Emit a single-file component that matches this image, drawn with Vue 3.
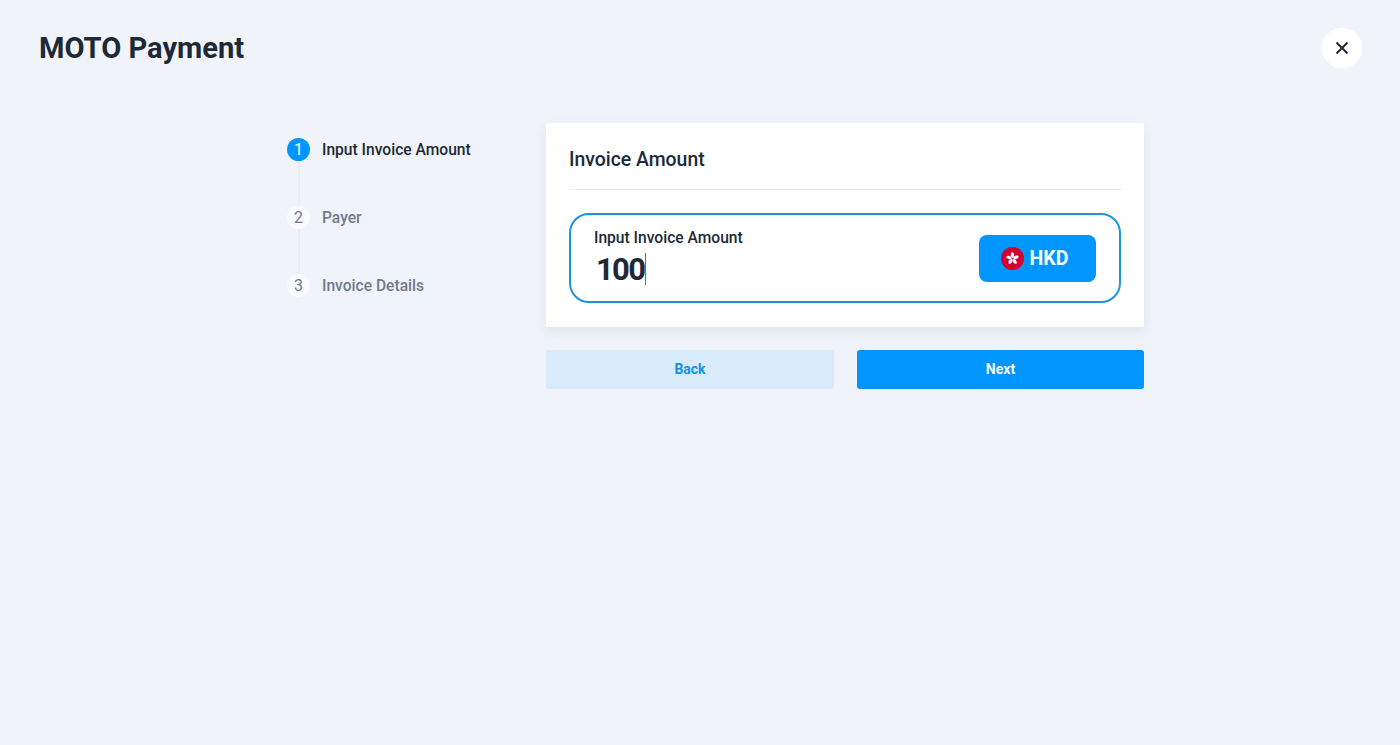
<script setup>
const steps = [
  { n: 1, label: 'Input Invoice Amount', active: true },
  { n: 2, label: 'Payer', active: false },
  { n: 3, label: 'Invoice Details', active: false },
]
const petals = [0, 72, 144, 216, 288]
</script>

<template>
  <div class="page">
    <header class="header">
      <h1 class="title">MOTO Payment</h1>
      <button class="close" aria-label="Close">
        <svg width="14" height="14" viewBox="0 0 14 14">
          <path d="M1.5 1.5 12.5 12.5M12.5 1.5 1.5 12.5" stroke="#1d2a36" stroke-width="2" fill="none" />
        </svg>
      </button>
    </header>
    <main class="main">
      <ol class="steps">
        <li v-for="s in steps" :key="s.n" class="step" :class="{ active: s.active }">
          <span class="num">{{ s.n }}</span>
          <span class="label">{{ s.label }}</span>
        </li>
      </ol>
      <section class="content">
        <div class="card">
          <h2 class="card-title">Invoice Amount</h2>
          <div class="field">
            <div class="field-text">
              <div class="field-label">Input Invoice Amount</div>
              <div class="amount"><span>100</span><i class="caret"></i></div>
            </div>
            <button class="currency">
              <svg class="flag" width="23" height="23" viewBox="0 0 24 24">
                <circle cx="12" cy="12" r="12" fill="#d5002f" />
                <g fill="#fff">
                  <path
                    v-for="a in petals"
                    :key="a"
                    d="M12 11.4C9.8 10.2 9.6 7.2 11.4 5.2 14.2 5.9 14.6 9.6 12 11.4Z"
                    :transform="`rotate(${a} 12 12)`"
                  />
                </g>
              </svg>
              <span>HKD</span>
            </button>
          </div>
        </div>
        <div class="actions">
          <button class="btn back">Back</button>
          <button class="btn next">Next</button>
        </div>
      </section>
    </main>
  </div>
</template>

<style>
html, body { margin: 0; background: #f0f4fa; }
</style>

<style scoped>
.page {
  min-height: 745px;
  box-sizing: border-box;
  background: #f0f4fa;
  font-family: Roboto, "Liberation Sans", sans-serif;
  color: #1d2a36;
}
.header {
  display: flex;
  align-items: center;
  justify-content: space-between;
  padding: 28px 38px 0 39px;
  height: 40px;
}
.title {
  margin: 0;
  font-size: 29.1px;
  line-height: 42px;
  font-weight: 700;
  color: #1d2a36;
}
.close {
  width: 40px;
  height: 40px;
  padding: 0;
  border: 0;
  border-radius: 50%;
  background: #fff;
  display: flex;
  align-items: center;
  justify-content: center;
}
.main {
  display: flex;
  padding: 55px 0 0 287px;
}
.steps {
  list-style: none;
  margin: 0;
  padding: 15px 0 0;
  width: 259px;
  flex: none;
}
.step {
  position: relative;
  display: flex;
  align-items: center;
  height: 23px;
  margin-bottom: 45px;
  gap: 12px;
}
.step:not(:last-child)::after {
  content: "";
  position: absolute;
  left: 10.5px;
  top: 23px;
  width: 2px;
  height: 45px;
  background: #e9eef5;
}
.num {
  width: 23px;
  height: 23px;
  flex: none;
  border-radius: 50%;
  display: flex;
  align-items: center;
  justify-content: center;
  font-size: 16px;
  background: #f8fafd;
  color: #6f7a8c;
}
.label {
  font-size: 15.6px;
  line-height: 24px;
  font-weight: 500;
  color: #6f7a8c;
}
.active .num { background: #0095ff; color: #fff; }
.active .label { color: #1d2a36; }
.content { width: 598px; flex: none; }
.card {
  box-sizing: border-box;
  height: 204px;
  padding: 0 23px;
  background: #fff;
  border-radius: 2px;
  box-shadow: 0 4px 12px rgba(29, 42, 54, 0.08);
}
.card-title {
  margin: 0;
  height: 67px;
  box-sizing: border-box;
  padding-top: 24px;
  font-size: 19.4px;
  line-height: 26px;
  font-weight: 500;
  color: #1d2a36;
  border-bottom: 1px solid #e8ecf1;
}
.field {
  box-sizing: border-box;
  height: 90px;
  margin-top: 23px;
  padding: 0 23px;
  display: flex;
  align-items: center;
  justify-content: space-between;
  border: 2px solid #1b95e0;
  border-radius: 20px;
}
.field-label {
  font-size: 15.6px;
  line-height: 20px;
  font-weight: 500;
  color: #1d2a36;
}
.amount {
  display: flex;
  align-items: center;
  height: 36px;
  margin-top: 3px;
  padding-left: 2px;
  font-size: 31px;
  letter-spacing: -1.7px;
  font-weight: 700;
  color: #1d2a36;
}
.caret {
  display: block;
  width: 1px;
  height: 32px;
  margin-left: 1px;
  background: #1b88c8;
}
.field-text { margin-top: -1px; }
.currency {
  box-sizing: border-box;
  width: 117px;
  height: 47px;
  padding: 0 6px 0 0;
  border: 0;
  border-radius: 8px;
  background: #0095ff;
  color: #fff;
  font-family: inherit;
  font-size: 19.5px;
  font-weight: 700;
  display: flex;
  align-items: center;
  justify-content: center;
  gap: 6px;
}
.actions {
  display: flex;
  justify-content: space-between;
  margin-top: 23px;
}
.btn {
  height: 39px;
  border: 0;
  border-radius: 3px;
  padding: 0 0 1px;
  font-family: inherit;
  font-size: 14px;
  font-weight: 700;
}
.back { width: 288px; background: #d9eafa; color: #0f93ea; }
.next { width: 287px; background: #0095ff; color: #fff; }
</style>
